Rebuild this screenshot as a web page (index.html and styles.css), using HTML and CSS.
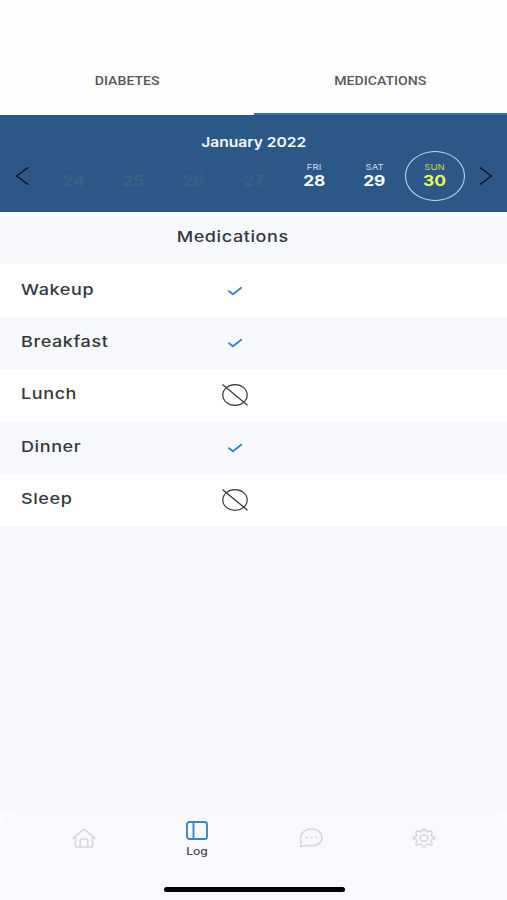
FILE: index.html
```html
<!DOCTYPE html>
<html lang="en">
<head>
<meta charset="utf-8">
<title>Medication log</title>
<link rel="stylesheet" href="styles.css">
</head>
<body>
<svg class="defs" aria-hidden="true">
  <symbol id="check" viewBox="0 0 16 12"><path d="M2 6.200 6 9.300 14.200 2.800" fill="none" stroke="#3582d1" stroke-width="1.900" stroke-linecap="round" stroke-linejoin="round"/></symbol>
  <symbol id="none" viewBox="0 0 28 24"><g fill="none" stroke="#33363a" stroke-width="1.200"><ellipse cx="14" cy="12" rx="12.200" ry="10.400"/><path d="M1.500 1.500 26.500 22.300"/></g></symbol>
</svg>
<div class="app">
  <nav class="tabs">
    <div class="tab"><span class="wide">DIABETES</span></div>
    <div class="tab active"><span class="wide">MEDICATIONS</span></div>
  </nav>
  <section class="calendar">
    <div class="month"><span class="wide">January 2022</span></div>
    <div class="week">
      <svg class="arrow" viewBox="0 0 14 20"><path d="M12.500 1.800 1.700 10l10.800 8.200"/></svg>
      <div class="days">
        <div class="day off"><small class="wide">MON</small><b class="wide">24</b></div>
        <div class="day off"><small class="wide">TUE</small><b class="wide">25</b></div>
        <div class="day off"><small class="wide">WED</small><b class="wide">26</b></div>
        <div class="day off"><small class="wide">THU</small><b class="wide">27</b></div>
        <div class="day"><small class="wide">FRI</small><b class="wide">28</b></div>
        <div class="day"><small class="wide">SAT</small><b class="wide">29</b></div>
        <div class="day selected"><small class="wide">SUN</small><b class="wide">30</b></div>
      </div>
      <svg class="arrow" viewBox="0 0 14 20"><path d="M1.500 1.800 12.300 10l-10.800 8.200"/></svg>
    </div>
  </section>
  <main class="log">
    <div class="row"><span></span><span class="cell"><span class="wide title">Medications</span></span></div>
    <div class="row"><span class="wide label">Wakeup</span><span class="cell"><svg class="check"><use href="#check"/></svg></span></div>
    <div class="row"><span class="wide label">Breakfast</span><span class="cell"><svg class="check"><use href="#check"/></svg></span></div>
    <div class="row"><span class="wide label">Lunch</span><span class="cell"><svg class="none"><use href="#none"/></svg></span></div>
    <div class="row"><span class="wide label">Dinner</span><span class="cell"><svg class="check"><use href="#check"/></svg></span></div>
    <div class="row"><span class="wide label">Sleep</span><span class="cell"><svg class="none"><use href="#none"/></svg></span></div>
  </main>
  <footer class="dock">
    <div class="bar">
      <div class="item"><svg class="icon" viewBox="0 0 24 20"><path d="M1 10.300 12 1l11 9.300M3.400 8.500v8.800q0 1.700 2 1.700h13.200q2 0 2-1.700V8.500M8.200 19v-6q0-2 2-2h3.600q2 0 2 2v6"/></svg></div>
      <div class="item current"><svg class="icon" viewBox="0 0 22 19"><rect x="1" y="1" width="20" height="17" rx="2.500"/><path d="M7.500 1v17"/></svg><span class="wide">Log</span></div>
      <div class="item"><svg class="icon" viewBox="0 0 24 20"><path d="M1 18.300c1.200-1.300 1.400-2.300 1-4C-.2 7.200 4.300 1 12.500 1 18.700 1 23 4.600 23 9.400s-4.300 8.500-10.500 8.500c-2.300 0-3.800-.6-5-.6-1.500 0-3 1.300-6.500 1Z"/><g class="dots"><circle cx="7.500" cy="9.500" r="1.100"/><circle cx="12.500" cy="9.500" r="1.100"/><circle cx="17.500" cy="9.500" r="1.100"/></g></svg></div>
      <div class="item"><svg class="icon" viewBox="0 0 24 20"><path d="M12 1q1.200 0 1.700 1.300l.3 1q1 .3 1.800.7l1.800-.7q1.600-.4 2.300.5t-.2 2.100l-.8 1q.5.700.7 1.400l1.700.4q1.700.4 1.700 1.300t-1.700 1.300l-1.700.4q-.2.700-.7 1.400l.8 1q.9 1.200.2 2.100t-2.300.5l-1.800-.7q-.8.400-1.800.7l-.3 1Q13.200 19 12 19t-1.700-1.300l-.3-1q-1-.3-1.800-.7l-1.800.7q-1.600.4-2.300-.5t.2-2.100l.8-1q-.5-.7-.7-1.400l-1.700-.4Q1 10.900 1 10t1.700-1.300l1.700-.4q.2-.7.7-1.400l-.8-1q-.9-1.200-.2-2.100t2.300-.5l1.800.7q.8-.4 1.800-.7l.3-1Q10.800 1 12 1Z"/><ellipse cx="12" cy="10" rx="4" ry="3.300"/></svg></div>
    </div>
    <div class="home-indicator"></div>
  </footer>
</div>
</body>
</html>
```

FILE: styles.css
```css
* { box-sizing: border-box; }
body { margin: 0; background: #f6f8fc; font-family: Inter, "Liberation Sans", sans-serif; color: #34373c; }
.defs { display: none; }
.app { width: 507px; height: 900px; display: flex; flex-direction: column; overflow: hidden; }
.wide { display: inline-block; white-space: nowrap; transform: scaleX(1.2); }

.tabs { height: 115px; flex: none; display: grid; grid-template-columns: 1fr 1fr; background: #fefefe; padding-top: 48px; }
.tab { display: flex; justify-content: center; align-items: center; border-bottom: 2px solid transparent; font: 500 12.5px/15px Roboto, sans-serif; color: #58595b; }
.tab.active { border-color: #2e70c4; }
.tab .wide { transform: translate(0.5px, -0.5px) scaleX(1.13); }

.calendar { height: 97px; flex: none; background: #2c5888; border-top: 1px solid #265184; border-bottom: 1px solid #254f81; padding-top: 18px; color: #f7faff; }
.month { text-align: center; font-size: 13px; line-height: 16px; font-weight: 600; padding-left: 1px; }
.week { display: flex; align-items: center; justify-content: space-between; padding: 0 14px 0 15px; height: 50px; margin-top: 1px; }
.arrow { width: 14px; height: 20px; fill: none; stroke: #0b1422; stroke-width: 1.5; stroke-linecap: round; stroke-linejoin: round; }
.days { display: grid; grid-template-columns: repeat(7, 60.3px); }
.day { height: 50px; display: flex; flex-direction: column; align-items: center; padding-top: 11px; }
.day small { font-size: 8px; line-height: 10px; color: #cddcf0; }
.day b { font-size: 14.5px; line-height: 17px; font-weight: 700; }
.day.off small { color: #315d89; }
.day.off b { color: #3a6084; }
.day.selected { border: 1px solid #c9d9ef; border-radius: 50%; padding-top: 10px; }
.day.selected small { color: #c6d552; }
.day.selected b { color: #effa52; }

.log { flex: none; }
.row { height: 52.4px; display: grid; grid-template-columns: 177px 116px; align-items: center; background: #f6f8fc; }
.row:nth-child(even), .row:nth-child(4) { background: #fff; }
.label { justify-self: start; margin-left: 21px; transform-origin: left; }
.label, .title { font-size: 15px; line-height: 20px; font-weight: 500; letter-spacing: 0.5px; position: relative; top: -1px; }
.title { left: -2px; }
.cell { display: flex; justify-content: center; }
.check { width: 16px; height: 12px; }
.none { width: 28px; height: 24px; }

.dock { height: 88px; margin-top: auto; flex: none; display: flex; flex-direction: column; align-items: center; background: linear-gradient(#fcfdff, #f9f9fe 20px); }
.bar { height: 75px; width: 100%; padding: 0 26px 0 27px; display: grid; grid-template-columns: repeat(4, 1fr); background: #f8f8fe; border-radius: 20px 20px 0 0; }
.item { display: flex; flex-direction: column; align-items: center; padding-top: 16px; }
.icon { width: 24px; height: 20px; fill: none; stroke: #d5d5da; stroke-width: 1.6; stroke-linejoin: round; stroke-linecap: round; }
.dots { fill: #d5d5da; stroke: none; }
.current { padding-top: 9px; }
.current .icon { width: 22px; height: 19px; stroke: #3c84ca; stroke-width: 1.9; }
.current span { font-size: 10px; line-height: 12px; margin-top: 5px; font-weight: 500; color: #48494d; }
.home-indicator { width: 181px; height: 5px; border-radius: 3px; background: #000; margin-left: 1px; }
```
